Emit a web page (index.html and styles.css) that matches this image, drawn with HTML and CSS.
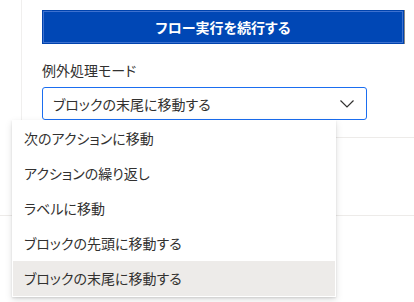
FILE: index.html
```html
<!DOCTYPE html>
<html lang="ja">
<head>
    <meta charset="UTF-8">
    <meta name="viewport" content="width=device-width, initial-scale=1.0">
    <title>例外処理モード</title>
    <link rel="stylesheet" href="styles.css">
</head>
<body>
    <div class="page">
        <div class="panel">
            <div class="button-row">
                <button class="primary-btn">フロー実行を続行する</button>
                <div class="next-btn"></div>
            </div>
            <label class="field-label">例外処理モード</label>
            <div class="select">
                <span>ブロックの末尾に移動する</span>
                <svg class="chevron" width="16" height="10" viewBox="0 0 16 10">
                    <path d="M1.5 1.5 L8 8 L14.5 1.5" fill="none" stroke="#323130" stroke-width="1.2"/>
                </svg>
            </div>
        </div>
        <div class="section"></div>

        <!-- Open dropdown list -->
        <ul class="dropdown">
            <li>次のアクションに移動</li>
            <li>アクションの繰り返し</li>
            <li>ラベルに移動</li>
            <li>ブロックの先頭に移動する</li>
            <li class="selected">ブロックの末尾に移動する</li>
        </ul>
    </div>
</body>
</html>
```

FILE: styles.css
```css
body {
    font-family: "Noto Sans CJK JP", "Noto Sans", sans-serif;
    font-feature-settings: "palt";
    color: #323130;
    background: white;
    margin: 0;
    padding: 0;
}
.page {
    position: relative;
    height: 302px;
    overflow: hidden;
}
.panel {
    margin-left: 21px;
    border-left: 1px solid #f0efee;
    border-bottom: 1px solid #edebe9;
    padding: 10px 0 17px 20px;
}
.button-row {
    display: flex;
    height: 34px;
}
.primary-btn {
    width: 362px;
    height: 34px;
    flex-shrink: 0;
    background: #0047b5;
    border: 1px solid #0043ad;
    box-shadow: inset 0 0 0 1px #3d71cf;
    color: white;
    font-family: inherit;
    font-feature-settings: "palt";
    font-size: 14px;
    font-weight: bold;
    padding: 0;
}
.next-btn {
    flex: 1;
    border-left: 1px solid #8a8886;
}
.field-label {
    display: block;
    font-size: 14px;
    line-height: 20px;
    margin-top: 16px;
}
.select {
    box-sizing: border-box;
    width: 325px;
    height: 33px;
    margin-top: 7px;
    border: 1px solid #1b6ef0;
    border-radius: 3px;
    display: flex;
    align-items: center;
    justify-content: space-between;
    padding: 0 10px 0 10px;
    font-size: 14px;
}
.chevron {
    display: block;
    margin-right: 1px;
}
.section {
    height: 77px;
    border-bottom: 1px solid #edebe9;
}
.dropdown {
    position: absolute;
    top: 120px;
    left: 12px;
    width: 324px;
    box-sizing: border-box;
    margin: 0;
    padding: 1px;
    list-style: none;
    background: white;
    box-shadow: 0 3.2px 7.2px rgba(0, 0, 0, 0.13), 0 0.6px 1.8px rgba(0, 0, 0, 0.11);
}
.dropdown li {
    height: 35px;
    line-height: 35px;
    padding-left: 11px;
    font-size: 14px;
}
.dropdown li.selected {
    background: #edebe9;
}
```
